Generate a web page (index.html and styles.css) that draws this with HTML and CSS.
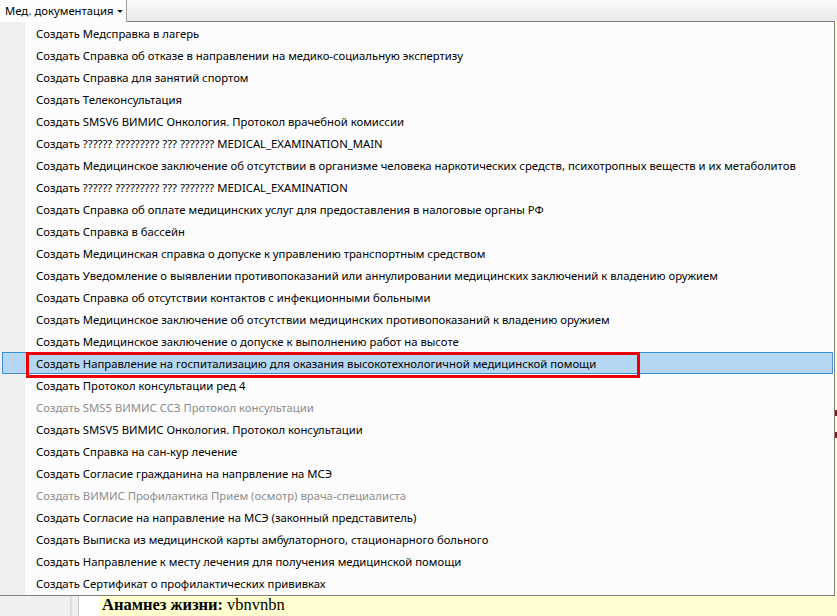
FILE: index.html
```html
<!DOCTYPE html>
<html lang="ru">
<head>
<meta charset="utf-8">
<link rel="stylesheet" href="styles.css">
</head>
<body>
<div class="app">
  <div class="toolbar">
    <div class="menu-btn">Мед. документация <span class="caret"></span></div>
  </div>
  <div class="content">
    <div class="left-panel"></div>
    <div class="splitter"></div>
    <div class="gap"></div>
    <div class="doc"><b>Анамнез жизни:</b> vbnvnbn</div>
  </div>
  <div class="side-marks"><i></i><i></i></div>

  <div class="dropdown">
    <div class="item">Создать Медсправка в лагерь</div>
    <div class="item">Создать Справка об отказе в направлении на медико-социальную экспертизу</div>
    <div class="item">Создать Справка для занятий спортом</div>
    <div class="item">Создать Телеконсультация</div>
    <div class="item">Создать SMSV6 ВИМИС Онкология. Протокол врачебной комиссии</div>
    <div class="item">Создать ?????? ????????? ??? ??????? MEDICAL_EXAMINATION_MAIN</div>
    <div class="item">Создать Медицинское заключение об отсутствии в организме человека наркотических средств, психотропных веществ и их метаболитов</div>
    <div class="item">Создать ?????? ????????? ??? ??????? MEDICAL_EXAMINATION</div>
    <div class="item">Создать Справка об оплате медицинских услуг для предоставления в налоговые органы РФ</div>
    <div class="item">Создать Справка в бассейн</div>
    <div class="item">Создать Медицинская справка о допуске к управлению транспортным средством</div>
    <div class="item">Создать Уведомление о выявлении противопоказаний или аннулировании медицинских заключений к владению оружием</div>
    <div class="item">Создать Справка об отсутствии контактов с инфекционными больными</div>
    <div class="item">Создать Медицинское заключение об отсутствии медицинских противопоказаний к владению оружием</div>
    <div class="item">Создать Медицинское заключение о допуске к выполнению работ на высоте</div>
    <div class="item active">Создать Направление на госпитализацию для оказания высокотехнологичной медицинской помощи<span class="mark"></span></div>
    <div class="item">Создать Протокол консультации ред 4</div>
    <div class="item disabled">Создать SMS5 ВИМИС ССЗ Протокол консультации</div>
    <div class="item">Создать SMSV5 ВИМИС Онкология. Протокол консультации</div>
    <div class="item">Создать Справка на сан-кур лечение</div>
    <div class="item">Создать Согласие гражданина на напрвление на МСЭ</div>
    <div class="item disabled">Создать ВИМИС Профилактика Прием (осмотр) врача-специалиста</div>
    <div class="item">Создать Согласие на направление на МСЭ (законный представитель)</div>
    <div class="item">Создать Выписка из медицинской карты амбулаторного, стационарного больного</div>
    <div class="item">Создать Направление к месту лечения для получения медицинской помощи</div>
    <div class="item">Создать Сертификат о профилактических прививках</div>
  </div>
</div>
</body>
</html>
```
FILE: styles.css
```css
html, body {
  margin: 0;
  padding: 0;
}
body {
  width: 837px;
  height: 616px;
  overflow: hidden;
  font-family: "Noto Sans", "Open Sans", sans-serif;
  font-size: 11.3px;
  color: #000;
  background: #ffffd0;
}
.app {
  position: relative;
  width: 837px;
  height: 616px;
  display: flex;
  flex-direction: column;
}
.toolbar {
  height: 21px;
  flex: none;
  background: linear-gradient(#fbfbfb, #e9e9e9);
  display: flex;
}
.menu-btn {
  width: 127px;
  height: 22px;
  box-sizing: border-box;
  padding: 3px 0 0 5px;
  background: #fdfdfd;
  border-right: 1px solid #a0a0a0;
  white-space: nowrap;
  position: relative;
  z-index: 2;
}
.caret {
  display: inline-block;
  width: 0;
  height: 0;
  margin-left: 1px;
  vertical-align: 2px;
  border-left: 3px solid transparent;
  border-right: 3px solid transparent;
  border-top: 3px solid #222;
}
.content {
  flex: 1;
  display: flex;
  background: #ffffd0;
}
.left-panel {
  width: 70px;
  background: #f0f0f0;
  border-right: 1px solid #d8d8d8;
}
.splitter {
  width: 6px;
  background: #f0f0f0;
  border-left: 1px solid #e0e0e0;
  border-right: 1px solid #c8c8c8;
}
.gap {
  width: 20px;
  background: #fff;
}
.doc {
  flex: 1;
  display: flex;
  align-items: flex-end;
  padding: 0 0 1px 3px;
  font-family: "Liberation Serif", serif;
  font-size: 16.5px;
  line-height: 20px;
  white-space: nowrap;
}
.doc b {
  margin-right: 4px;
}
.side-marks {
  position: absolute;
  right: 0;
  top: 410px;
  width: 2px;
  display: flex;
  flex-direction: column;
  gap: 16px;
}
.side-marks i {
  display: block;
  width: 2px;
  height: 6px;
  background: #8a1a10;
}
.dropdown {
  position: absolute;
  left: 0;
  top: 21px;
  width: 835px;
  height: 575px;
  box-sizing: border-box;
  border: 1px solid #808080;
  border-left: none;
  background: linear-gradient(90deg, #f0f0f0 0, #f0f0f0 25px, #fcfcfc 25px);
  z-index: 1;
}
.item {
  position: relative;
  height: 22px;
  padding: 2px 0 0 36px;
  line-height: 19px;
  white-space: nowrap;
  box-sizing: border-box;
}
.item.disabled {
  color: #8d8d8d;
}
.item.active {
  background: #b5d7f3;
  border: 1px solid #3d8fd6;
  margin: 0 1px 0 2px;
  padding: 1px 0 0 33px;
  line-height: 19px;
}
.mark {
  position: absolute;
  left: 23px;
  top: -1px;
  width: 614px;
  height: 26px;
  box-sizing: border-box;
  border: 3px solid #ee0000;
}
```
